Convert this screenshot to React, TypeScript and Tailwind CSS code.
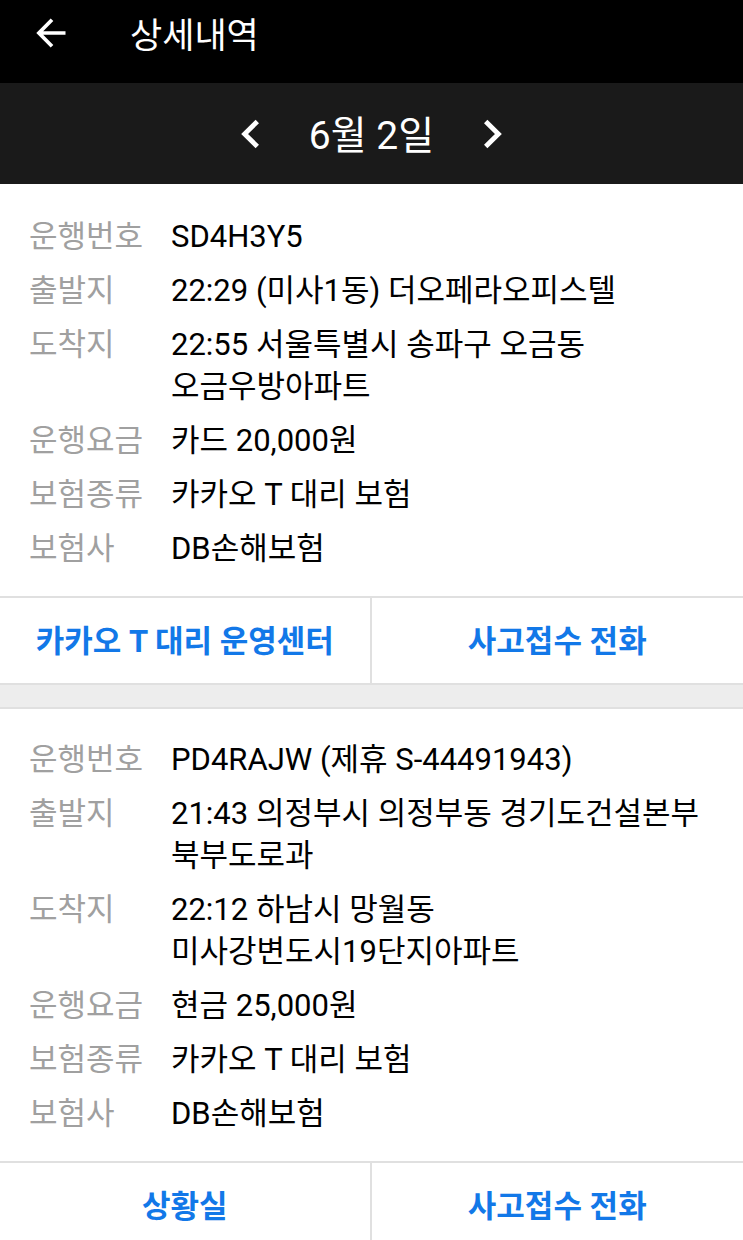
type Field = { label: string; value: string };
type Trip = { fields: Field[]; actions: string[] };

const trips: Trip[] = [
  {
    fields: [
      { label: "운행번호", value: "SD4H3Y5" },
      { label: "출발지", value: "22:29 (미사1동) 더오페라오피스텔" },
      { label: "도착지", value: "22:55 서울특별시 송파구 오금동 오금우방아파트" },
      { label: "운행요금", value: "카드 20,000원" },
      { label: "보험종류", value: "카카오 T 대리 보험" },
      { label: "보험사", value: "DB손해보험" },
    ],
    actions: ["카카오 T 대리 운영센터", "사고접수 전화"],
  },
  {
    fields: [
      { label: "운행번호", value: "PD4RAJW (제휴 S-44491943)" },
      { label: "출발지", value: "21:43 의정부시 의정부동 경기도건설본부 북부도로과" },
      { label: "도착지", value: "22:12 하남시 망월동 미사강변도시19단지아파트" },
      { label: "운행요금", value: "현금 25,000원" },
      { label: "보험종류", value: "카카오 T 대리 보험" },
      { label: "보험사", value: "DB손해보험" },
    ],
    actions: ["상황실", "사고접수 전화"],
  },
];

function BackIcon() {
  return (
    <svg viewBox="0 0 30 30" className="size-[30px]" fill="none" stroke="currentColor" strokeWidth="3.7" aria-hidden="true">
      <path d="M29.5 15H3.5M16 1.7 2.9 15 16 28.3" />
    </svg>
  );
}

function Chevron({ direction }: { direction: "left" | "right" }) {
  return (
    <svg viewBox="0 0 18 30" className="h-[30px] w-[18px]" fill="none" stroke="currentColor" strokeWidth="4.8" aria-hidden="true">
      <path d={direction === "left" ? "M16.3 2.5 3.6 15 16.3 27.5" : "M1.7 2.5 14.4 15 1.7 27.5"} />
    </svg>
  );
}

function TripCard({ trip }: { trip: Trip }) {
  return (
    <article className="border-y-2 border-[#e0e0e0] bg-white first:border-t-white">
      <dl className="flex flex-col gap-3 px-[29px] pt-[30px] pb-[26px] text-[31px] leading-[42px]">
        {trip.fields.map((field) => (
          <div key={field.label} className="flex">
            <dt className="w-[142px] shrink-0 text-[#a0a0a0]">{field.label}</dt>
            <dd className="min-w-0 flex-1 break-keep text-black">{field.value}</dd>
          </div>
        ))}
      </dl>
      <div className="grid grid-cols-2 divide-x-2 divide-[#e0e0e0] border-t-2 border-[#e0e0e0]">
        {trip.actions.map((action) => (
          <button key={action} type="button" className="h-[85px] pt-1 text-[31px] font-bold text-[#1278e8]">
            {action}
          </button>
        ))}
      </div>
    </article>
  );
}

export default function App() {
  return (
    <div className="bg-[#ededed] font-[Roboto,'Noto_Sans_CJK_KR',sans-serif]">
      <header className="flex h-[83px] items-start bg-black px-9 pt-[9px] text-white">
        <button type="button" aria-label="뒤로" className="flex h-12 items-center">
          <BackIcon />
        </button>
        <h1 className="ml-16 pt-1 text-[35px] leading-[48px]">상세내역</h1>
      </header>
      <nav className="flex h-[101px] items-center justify-center gap-[50px] bg-[#1a1a1a] text-white">
        <button type="button" aria-label="이전 날짜">
          <Chevron direction="left" />
        </button>
        <span className="pt-1 text-[39px] leading-[56px]">6월 2일</span>
        <button type="button" aria-label="다음 날짜">
          <Chevron direction="right" />
        </button>
      </nav>
      <main className="flex flex-col gap-[22px]">
        {trips.map((trip) => (
          <TripCard key={trip.fields[0].value} trip={trip} />
        ))}
      </main>
    </div>
  );
}
